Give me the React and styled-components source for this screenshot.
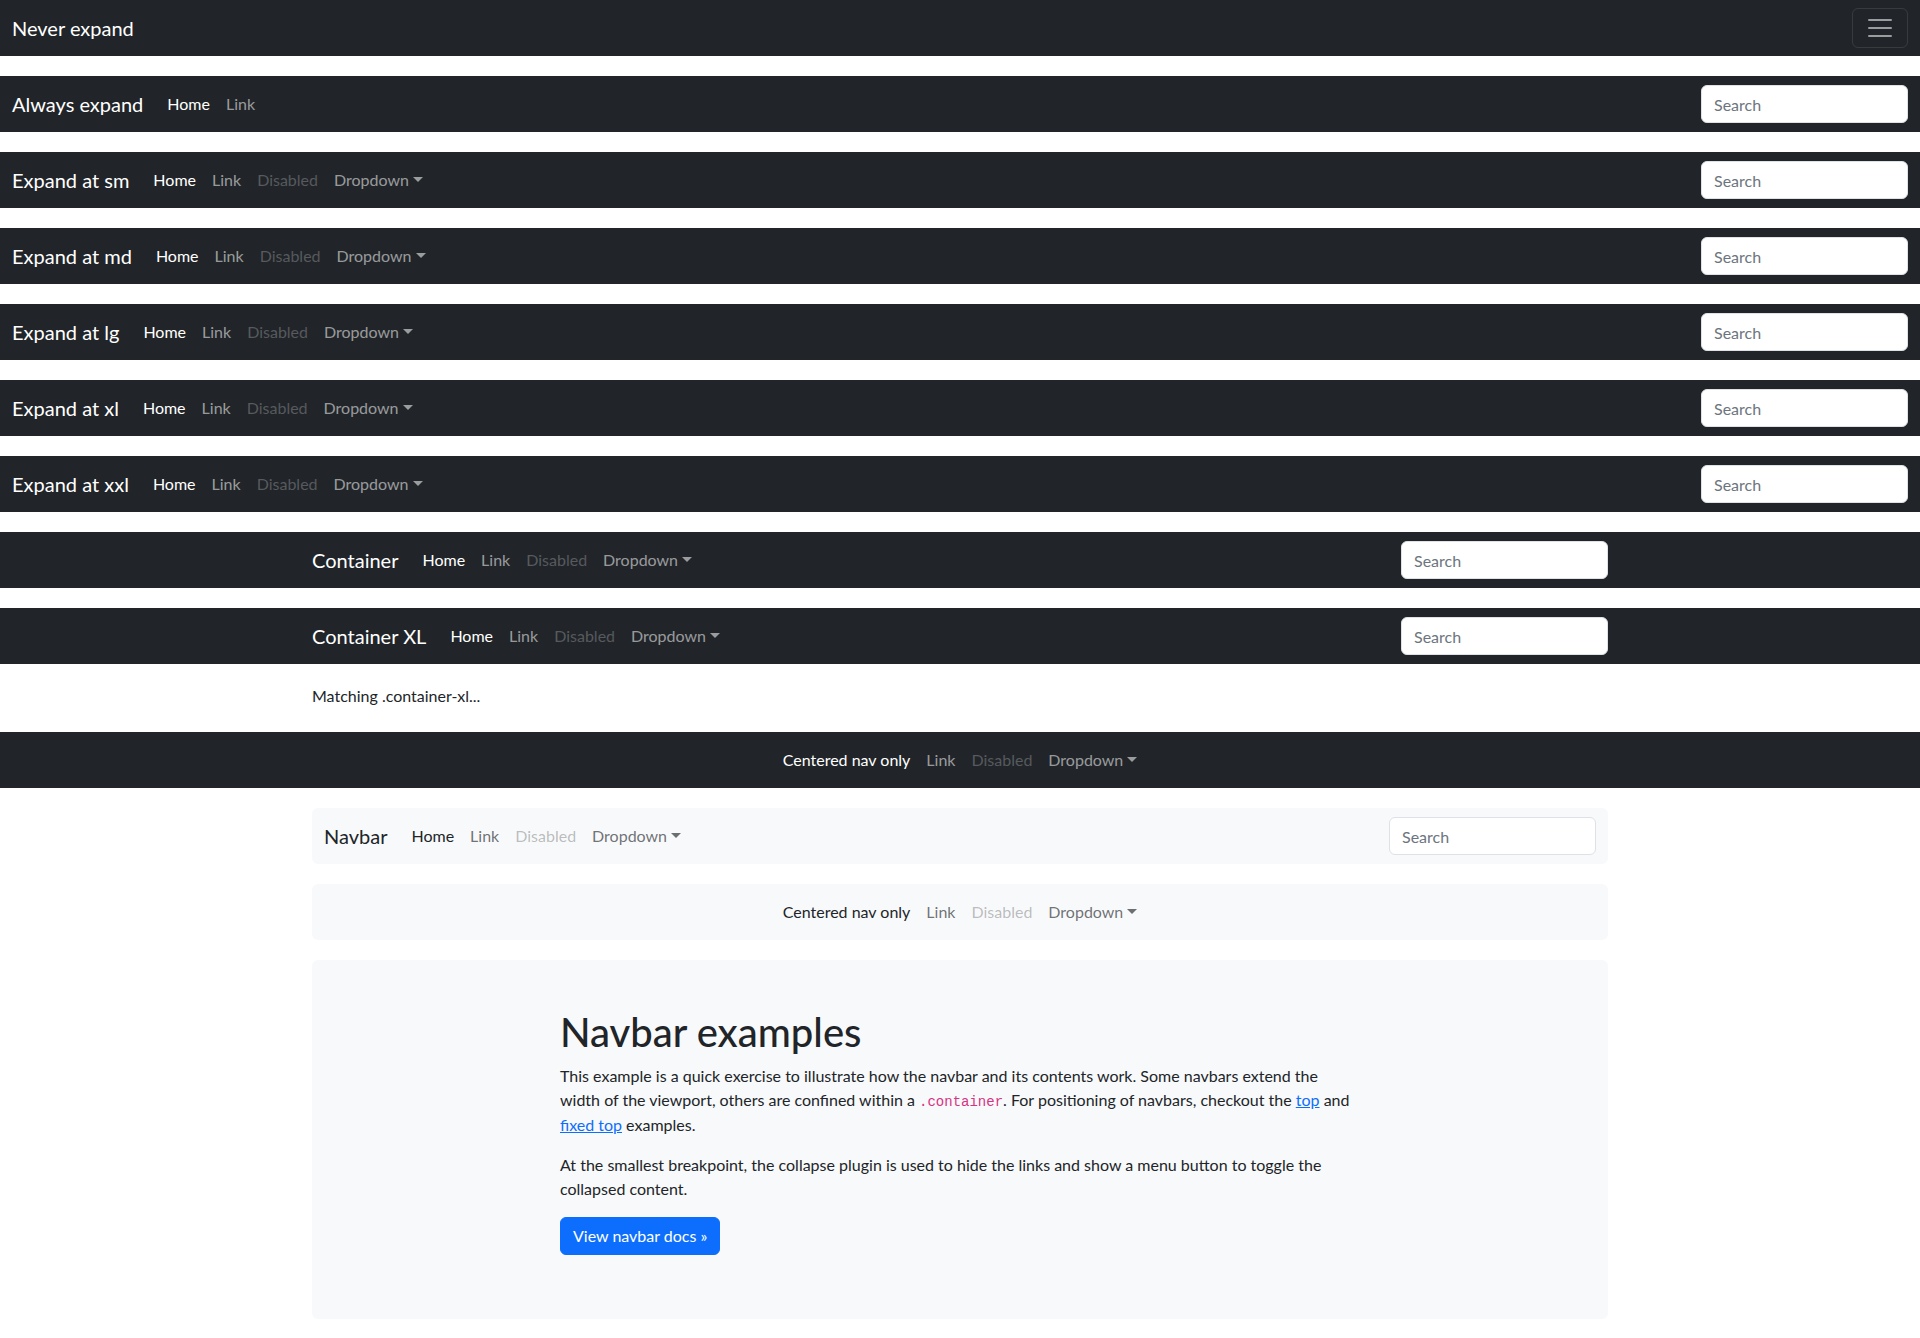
import React from 'react';
import styled, { createGlobalStyle } from 'styled-components';

const GlobalStyle = createGlobalStyle`
  *, *::before, *::after { box-sizing: border-box; }
  body {
    margin: 0;
    padding-bottom: 20px;
    font-family: Lato, "Open Sans", "Liberation Sans", sans-serif;
    font-size: 16px;
    line-height: 1.5;
    color: #212529;
    background: #fff;
  }
`;

const Navbar = styled.nav`
  display: flex;
  align-items: center;
  padding: 8px 0;
  margin-bottom: 20px;
  background: ${(p) => (p.$light ? '#f8f9fa' : '#212529')};
  border-radius: ${(p) => (p.$rounded ? '6px' : '0')};
`;

const Bar = styled.div`
  display: flex;
  align-items: center;
  justify-content: ${(p) => (p.$center ? 'center' : 'space-between')};
  width: 100%;
  max-width: ${(p) => (p.$boxed ? '1320px' : 'none')};
  margin: 0 auto;
  padding: 0 12px;
`;

const Brand = styled.a`
  font-size: 20px;
  line-height: 30px;
  padding: 5px 0;
  margin-right: 16px;
  white-space: nowrap;
  text-decoration: none;
  color: ${(p) => (p.$light ? 'rgba(33,37,41,1)' : '#fff')};
`;

const Collapse = styled.div`
  display: flex;
  align-items: center;
  flex: ${(p) => (p.$center ? '0 1 auto' : '1 1 auto')};
`;

const NavList = styled.ul`
  display: flex;
  list-style: none;
  margin: 0 auto 0 0;
  padding: 0;
`;

const linkColor = (p) => {
  if (p.$light) {
    if (p.$active) return 'rgba(33,37,41,1)';
    if (p.$disabled) return 'rgba(33,37,41,0.3)';
    return 'rgba(33,37,41,0.65)';
  }
  if (p.$active) return '#fff';
  if (p.$disabled) return 'rgba(255,255,255,0.25)';
  return 'rgba(255,255,255,0.55)';
};

const NavLink = styled.a`
  display: block;
  padding: 8px;
  line-height: 24px;
  text-decoration: none;
  white-space: nowrap;
  color: ${linkColor};
`;

const Caret = styled.span`
  display: inline-block;
  margin-left: 4px;
  vertical-align: 4px;
  border-top: 5px solid currentColor;
  border-left: 5px solid transparent;
  border-right: 5px solid transparent;
`;

const SearchInput = styled.input`
  display: block;
  width: 207px;
  height: 38px;
  padding: 6px 12px;
  font: inherit;
  color: #212529;
  background: #fff;
  border: 1px solid #dee2e6;
  border-radius: 6px;
  &::placeholder { color: #6c757d; }
`;

const Toggler = styled.button`
  display: flex;
  align-items: center;
  justify-content: center;
  width: 56px;
  height: 40px;
  padding: 0;
  background: transparent;
  border: 1px solid rgba(255,255,255,0.1);
  border-radius: 6px;
`;

const Container = styled.div`
  max-width: 1320px;
  margin: 0 auto;
  padding: 0 12px;
`;

const Note = styled.div`
  max-width: 1320px;
  margin: 0 auto 24px;
  padding: 0 12px;
`;

const Jumbo = styled.div`
  background: #f8f9fa;
  border-radius: 6px;
  padding: 48px;
`;

const Column = styled.div`
  width: 800px;
  margin: 0 auto;
`;

const Title = styled.h1`
  font-size: 40px;
  font-weight: 500;
  line-height: 1.2;
  margin: 0 0 8px;
`;

const Para = styled.p`
  margin: 0 0 16px;
`;

const Code = styled.code`
  font-family: "Liberation Mono", "DejaVu Sans Mono", monospace;
  font-size: 14px;
  color: #d63384;
`;

const TextLink = styled.a`
  color: #0d6efd;
  text-decoration: underline;
`;

const Button = styled.a`
  display: inline-block;
  padding: 6px 12px;
  line-height: 24px;
  color: #fff;
  background: #0d6efd;
  border: 1px solid #0d6efd;
  border-radius: 6px;
  text-decoration: none;
`;

const Links = ({ light, home = 'Home', full = true }) => (
  <NavList>
    <li><NavLink $light={light} $active>{home}</NavLink></li>
    <li><NavLink $light={light}>Link</NavLink></li>
    {full && <li><NavLink $light={light} $disabled>Disabled</NavLink></li>}
    {full && (
      <li>
        <NavLink $light={light}>Dropdown<Caret /></NavLink>
      </li>
    )}
  </NavList>
);

const ExpandBar = ({ title, boxed, full = true }) => (
  <Navbar>
    <Bar $boxed={boxed}>
      <Brand>{title}</Brand>
      <Collapse>
        <Links full={full} />
        <SearchInput type="search" placeholder="Search" />
      </Collapse>
    </Bar>
  </Navbar>
);

const App = () => (
  <>
    <GlobalStyle />
    <Navbar>
      <Bar>
        <Brand>Never expand</Brand>
        <Toggler aria-label="Toggle navigation">
          <svg width="30" height="30" viewBox="0 0 30 30">
            <path d="M4 7h22M4 15h22M4 23h22" stroke="rgba(255,255,255,0.55)" strokeWidth="2" strokeLinecap="round" />
          </svg>
        </Toggler>
      </Bar>
    </Navbar>

    <ExpandBar title="Always expand" full={false} />
    <ExpandBar title="Expand at sm" />
    <ExpandBar title="Expand at md" />
    <ExpandBar title="Expand at lg" />
    <ExpandBar title="Expand at xl" />
    <ExpandBar title="Expand at xxl" />
    <ExpandBar title="Container" boxed />
    <ExpandBar title="Container XL" boxed />

    <Note>Matching .container-xl...</Note>

    <Navbar>
      <Bar $center>
        <Collapse $center>
          <Links home="Centered nav only" />
        </Collapse>
      </Bar>
    </Navbar>

    <Container>
      <Navbar $light $rounded>
        <Bar>
          <Brand $light>Navbar</Brand>
          <Collapse>
            <Links light />
            <SearchInput type="search" placeholder="Search" />
          </Collapse>
        </Bar>
      </Navbar>

      <Navbar $light $rounded>
        <Bar $center>
          <Collapse $center>
            <Links light home="Centered nav only" />
          </Collapse>
        </Bar>
      </Navbar>

      <Jumbo>
        <Column>
          <Title>Navbar examples</Title>
          <Para>
            This example is a quick exercise to illustrate how the navbar and its contents work. Some navbars extend the
            width of the viewport, others are confined within a <Code>.container</Code>. For positioning of navbars,
            checkout the <TextLink>top</TextLink> and <TextLink>fixed top</TextLink> examples.
          </Para>
          <Para>
            At the smallest breakpoint, the collapse plugin is used to hide the links and show a menu button to toggle
            the collapsed content.
          </Para>
          <Para>
            <Button role="button">View navbar docs »</Button>
          </Para>
        </Column>
      </Jumbo>
    </Container>
  </>
);

export default App;
